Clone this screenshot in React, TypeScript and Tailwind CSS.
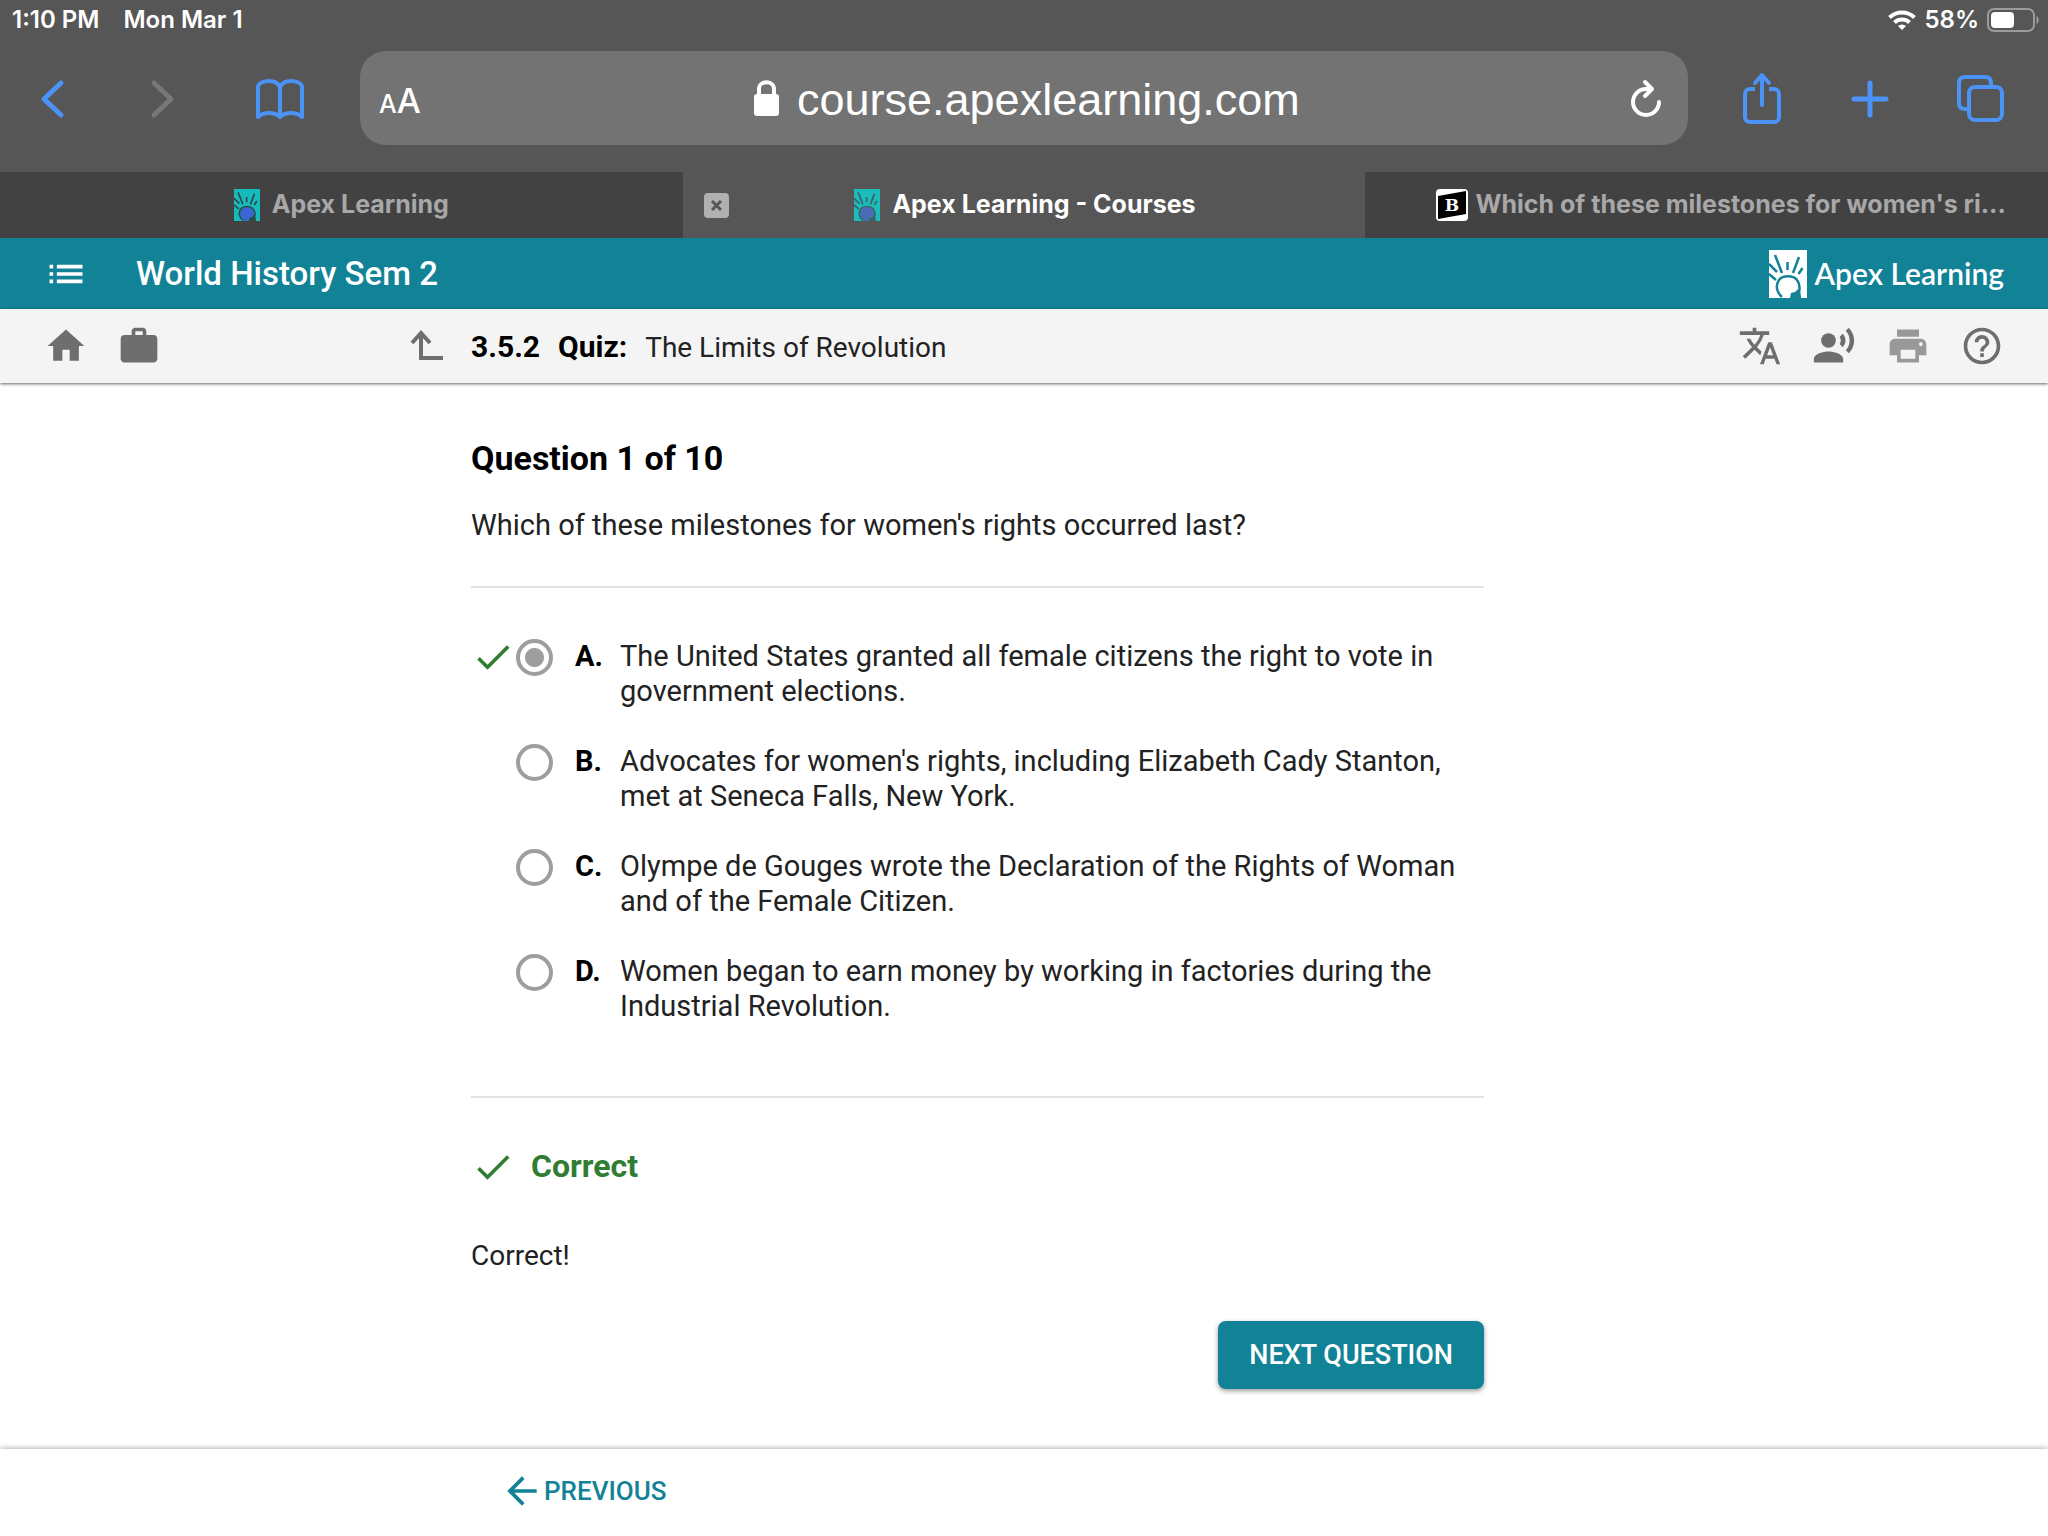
import React, { useState } from "react";
import {
  MdArrowBack,
  MdCheck,
  MdHelpOutline,
  MdHome,
  MdList,
  MdPrint,
  MdRecordVoiceOver,
  MdTranslate,
  MdWork,
} from "react-icons/md";

interface Choice {
  letter: string;
  text: string;
}

const choices: Choice[] = [
  {
    letter: "A",
    text: "The United States granted all female citizens the right to vote in government elections.",
  },
  {
    letter: "B",
    text: "Advocates for women's rights, including Elizabeth Cady Stanton, met at Seneca Falls, New York.",
  },
  {
    letter: "C",
    text: "Olympe de Gouges wrote the Declaration of the Rights of Woman and of the Female Citizen.",
  },
  {
    letter: "D",
    text: "Women began to earn money by working in factories during the Industrial Revolution.",
  },
];

const correctLetter = "A";

interface ApexMarkProps {
  className: string;
  background: string;
  ink: string;
  head: string;
}

// Figure with raised rays, used for the favicons and the header logo
const ApexMark: React.FC<ApexMarkProps> = ({
  className,
  background,
  ink,
  head,
}) => (
  <svg
    viewBox="0 0 38 48"
    preserveAspectRatio="none"
    className={className}
    aria-hidden="true"
  >
    <rect width="38" height="48" fill={background} />
    <path
      d="M14 48c-1-3-5-6-5-11a10 10 0 0 1 20 0c0 3-1 4-3 4l-4 2-2 5z"
      fill={head}
    />
    <g stroke={ink} strokeWidth="2.5" fill="none">
      <path d="M6 5l7 18M18.500 12v8M30 7l-6 16M33.500 18l-4 6M0 14l8 8M0 24l7 6" />
      <path d="M13 47c-5-4-7-11-3-17 4-5 14-5 18 0 3 4 3 8 2 12l1 6" />
    </g>
    <path d="M29 39l-3 3-4 1-1 5h10z" fill={ink} />
  </svg>
);

const StatusBar = () => (
  <div className="flex h-10 items-center justify-between pl-3 pr-2 text-[24px] font-semibold text-white">
    <div className="flex gap-6">
      <span>1:10 PM</span>
      <span>Mon Mar 1</span>
    </div>
    <div className="flex items-center gap-2">
      <svg width="28" height="22" viewBox="0 0 28 22" aria-hidden="true">
        <g fill="none" stroke="white" strokeWidth="4">
          <path d="M1.500 8.500a18 18 0 0 1 25 0" />
          <path d="M6.500 13.500a11 11 0 0 1 15 0" />
        </g>
        <path d="M14 21l-4-4a6 6 0 0 1 8 0z" fill="white" />
      </svg>
      <span>58%</span>
      <svg width="53" height="24" viewBox="0 0 53 24" aria-hidden="true">
        <rect
          x="1"
          y="1"
          width="46"
          height="22"
          rx="6"
          fill="none"
          stroke="#9b9b9b"
          strokeWidth="2"
        />
        <rect x="4" y="4" width="23" height="16" rx="4" fill="white" />
        <path d="M49.500 8c3 1 3 7 0 8z" fill="#9b9b9b" />
      </svg>
    </div>
  </div>
);

const Toolbar = () => (
  <div className="flex items-center pb-[27px] pl-7 pr-11 pt-[11px] text-[#4b93f7]">
    <div className="mr-14 flex gap-[66px]">
      <button aria-label="Back">
        <svg width="48" height="48" viewBox="0 0 48 48" fill="none">
          <path
            d="M33 9L16 25l17 16"
            stroke="currentColor"
            strokeWidth="5"
            strokeLinecap="round"
            strokeLinejoin="round"
          />
        </svg>
      </button>
      <button aria-label="Forward" disabled className="text-[#777777]">
        <svg width="48" height="48" viewBox="0 0 48 48" fill="none">
          <path
            d="M12 9l17 16-17 16"
            stroke="currentColor"
            strokeWidth="5"
            strokeLinecap="round"
            strokeLinejoin="round"
          />
        </svg>
      </button>
      <button aria-label="Bookmarks">
        <svg width="48" height="48" viewBox="0 0 48 48" fill="none">
          <path
            d="M24 13c-2-4-6-6-11-6S2 9 2 13v30c3-3 7-4 11-4s8 1 11 4c3-3 7-4 11-4s8 1 11 4V13c0-4-6-6-11-6s-9 2-11 6zM24 13v30"
            stroke="currentColor"
            strokeWidth="4"
            strokeLinejoin="round"
          />
        </svg>
      </button>
    </div>

    <div className="grid h-[94px] flex-1 grid-cols-[1fr_auto_1fr] items-center rounded-[26px] bg-[#737373] pl-[19px] pr-6 text-white">
      <button
        aria-label="Page settings"
        className="flex items-baseline justify-self-start pt-1 font-medium"
      >
        <span className="text-[25px]">A</span>
        <span className="text-[34px]">A</span>
      </button>
      <div className="flex items-center gap-[18px] pl-4">
        <svg width="25" height="36" viewBox="0 0 25 36" aria-hidden="true">
          <rect y="14" width="25" height="22" rx="3" fill="white" />
          <path
            d="M5 16V9c0-9 15-9 15 0v7"
            fill="none"
            stroke="white"
            strokeWidth="4"
          />
        </svg>
        <input
          aria-label="Address"
          readOnly
          value="course.apexlearning.com"
          className="h-16 w-[508px] bg-transparent pt-1 font-['Liberation_Sans',sans-serif] text-[45px] outline-none"
        />
      </div>
      <button aria-label="Reload" className="justify-self-end">
        <svg width="36" height="42" viewBox="0 0 36 42" fill="none">
          <g
            stroke="currentColor"
            strokeWidth="4"
            strokeLinecap="round"
            strokeLinejoin="round"
          >
            <path d="M20 12h-2a13 13 0 1 0 13 13" />
            <path d="M17 5l7 7-7 7" />
          </g>
        </svg>
      </button>
    </div>

    <div className="ml-[50px] flex items-center gap-[60px]">
      <button aria-label="Share">
        <svg width="48" height="52" viewBox="0 0 48 52" fill="none">
          <g
            stroke="currentColor"
            strokeWidth="4"
            strokeLinejoin="round"
            strokeLinecap="round"
          >
            <path
              strokeLinecap="butt"
              d="M17 17h-5c-3 0-5 2-5 5v23c0 3 2 5 5 5h24c3 0 5-2 5-5V22c0-3-2-5-5-5h-5"
            />
            <path d="M24 33V4M17 11l7-8 7 8" />
          </g>
        </svg>
      </button>
      <button aria-label="New tab">
        <svg width="48" height="48" viewBox="0 0 48 48" fill="none">
          <path
            d="M24 9v32M8 25h32"
            stroke="currentColor"
            strokeWidth="5"
            strokeLinecap="round"
          />
        </svg>
      </button>
      <button aria-label="Show tabs">
        <svg width="50" height="48" viewBox="0 0 50 48" fill="none">
          <g stroke="currentColor" strokeWidth="4">
            <path d="M15 35h-4c-4 0-6-2-6-6V9c0-4 2-6 6-6h20c4 0 6 2 6 6v4" />
            <rect x="15" y="13" width="33" height="33" rx="6" />
          </g>
        </svg>
      </button>
    </div>
  </div>
);

const TabStrip = () => (
  <div className="grid h-[66px] grid-cols-3 text-[25px] font-bold">
    <button className="flex items-center justify-center gap-3 bg-[#424242] text-[#a8a8a8]">
      <ApexMark
        className="h-8 w-[26px]"
        background="#16bcbc"
        ink="#2f4a4c"
        head="#3a66d6"
      />
      Apex Learning
    </button>
    <div className="grid grid-cols-[46px_1fr_44px] items-center text-white">
      <button
        aria-label="Close tab"
        className="ml-[21px] flex h-[25px] w-[25px] items-center justify-center rounded-[4px] bg-[#b0b0b0]"
      >
        <svg width="13" height="13" viewBox="0 0 13 13" fill="none">
          <path d="M2 2l9 9M11 2l-9 9" stroke="#555555" strokeWidth="3" />
        </svg>
      </button>
      <button className="flex items-center justify-center gap-3 whitespace-nowrap">
        <ApexMark
          className="h-8 w-[26px]"
          background="#1dbcbc"
          ink="#3a6268"
          head="#4a69b8"
        />
        Apex Learning - Courses
      </button>
    </div>
    <button className="flex items-center justify-center gap-2 bg-[#424242] pl-7 text-[#a8a8a8]">
      <svg
        width="32"
        height="32"
        viewBox="0 0 32 32"
        className="shrink-0"
        aria-hidden="true"
      >
        <rect width="32" height="32" rx="4" fill="white" />
        <path d="M2 7l28-5v23L2 30z" fill="black" />
        <text
          x="16"
          y="22"
          textAnchor="middle"
          fontSize="17"
          fontWeight="bold"
          fill="white"
          className="font-['DejaVu_Serif',serif]"
        >
          B
        </text>
      </svg>
      <span className="whitespace-nowrap">
        Which of these milestones for women's ri...
      </span>
    </button>
  </div>
);

const CourseHeader = () => (
  <header className="flex h-[71px] items-center justify-between bg-[#128297] pl-11 pr-11 text-white">
    <div className="flex items-center gap-12">
      <button aria-label="Course menu">
        <MdList size={44} />
      </button>
      <span className="text-[33px] font-medium">World History Sem 2</span>
    </div>
    <a href="#" className="flex items-center gap-2">
      <ApexMark
        className="h-12 w-[38px]"
        background="#ffffff"
        ink="#128297"
        head="#ffffff"
      />
      <span className="font-['Lato',sans-serif] text-[30px] font-semibold">
        Apex Learning
      </span>
    </a>
  </header>
);

const ActivityBar = () => (
  <nav className="relative flex h-[74px] items-center bg-[#f4f4f4] pl-11 pr-11 text-[#6e6e6e] shadow-[0_1px_3px_rgba(0,0,0,0.6)]">
    <div className="flex w-[358px] gap-[29px]">
      <button aria-label="Home">
        <MdHome size={44} />
      </button>
      <button aria-label="Portfolio">
        <MdWork size={44} />
      </button>
    </div>
    <button aria-label="Up one level" className="w-[69px]">
      <svg width="44" height="44" viewBox="0 0 44 44" fill="none">
        <path
          d="M41 34H19V9M10 19l9-10 9 10"
          stroke="currentColor"
          strokeWidth="4"
        />
      </svg>
    </button>
    <div className="flex items-baseline gap-[18px] text-[28px] text-[#222222]">
      <span className="text-[30px] font-bold text-black">3.5.2</span>
      <span className="text-[30px] font-bold text-black">Quiz:</span>
      <span>The Limits of Revolution</span>
    </div>
    <div className="ml-auto flex gap-[30px]">
      <button aria-label="Translate">
        <MdTranslate size={44} />
      </button>
      <button aria-label="Read aloud">
        <MdRecordVoiceOver size={44} />
      </button>
      <button aria-label="Print" className="text-[#999999]">
        <MdPrint size={44} />
      </button>
      <button aria-label="Help">
        <MdHelpOutline size={44} />
      </button>
    </div>
  </nav>
);

const App: React.FC = () => {
  const [selected, setSelected] = useState(correctLetter);

  return (
    <div className="flex min-h-screen flex-col bg-white">
      <div className="bg-[#565656] font-['Inter',sans-serif]">
        <StatusBar />
        <Toolbar />
        <TabStrip />
      </div>

      <div className="flex flex-1 flex-col font-['Roboto',sans-serif] text-[#222222]">
        <CourseHeader />
        <ActivityBar />

        <main className="ml-[23%] w-[1013px] max-w-[77%] flex-1 pt-[55px]">
          <h1 className="text-[34px] font-bold leading-10 text-black">
            Question 1 of 10
          </h1>
          <p className="mt-[29px] text-[29px] leading-9">
            Which of these milestones for women's rights occurred last?
          </p>

          <fieldset
            aria-label="Answer choices"
            className="mt-[43px] flex flex-col gap-[35px] border-y-2 border-[#e2e2e2] pb-[72px] pt-[51px]"
          >
            {choices.map(({ letter, text }) => (
              <label
                key={letter}
                className="grid grid-cols-[45px_37px_67px_1fr] text-[29px] leading-[35px]"
              >
                <span className="text-[#2e7d32]">
                  {selected === letter && letter === correctLetter && (
                    <MdCheck size={44} className="-my-1" />
                  )}
                </span>
                <input
                  type="radio"
                  name="answer"
                  value={letter}
                  checked={selected === letter}
                  onChange={() => setSelected(letter)}
                  className="h-[37px] w-[37px] appearance-none rounded-full border-4 border-[#9e9e9e] bg-white checked:bg-[radial-gradient(circle,#9e9e9e_9px,white_10px)]"
                />
                <span className="pl-[22px] font-bold text-black">
                  {letter}.
                </span>
                <span>{text}</span>
              </label>
            ))}
          </fieldset>

          <div className="mt-[46px] flex items-center gap-4 text-[32px] font-bold leading-[45px] text-[#2e7d32]">
            <MdCheck size={44} />
            <h2>Correct</h2>
          </div>
          <p className="mt-[49px] text-[28px] leading-9">Correct!</p>

          <div className="mt-[47px] flex justify-end">
            <button className="h-[68px] rounded-lg bg-[#128297] px-[31px] text-[27px] font-medium text-white shadow-[0_2px_5px_rgba(0,0,0,0.4)]">
              NEXT QUESTION
            </button>
          </div>
        </main>

        <footer className="h-[87px] bg-white pl-[500px] pt-5 shadow-[0_-1px_5px_rgba(0,0,0,0.3)]">
          <button className="flex items-center text-[26px] font-medium text-[#128297]">
            <MdArrowBack size={44} />
            PREVIOUS
          </button>
        </footer>
      </div>
    </div>
  );
};

export default App;
